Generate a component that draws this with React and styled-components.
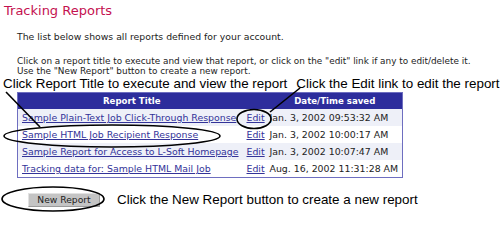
import React from "react";
import styled, { createGlobalStyle } from "styled-components";

const GlobalStyle = createGlobalStyle`
  html, body {
    margin: 0;
    padding: 0;
    background: #fff;
  }
`;

const Page = styled.div`
  position: relative;
  width: 500px;
  height: 217px;
  overflow: hidden;
  font-family: "DejaVu Sans", Verdana, sans-serif;
  color: #222;
`;

const Title = styled.h1`
  margin: 0;
  padding: 3px 0 0 4px;
  font-size: 13px;
  line-height: 16px;
  font-weight: normal;
  color: #c41150;
`;

const Text = styled.p`
  margin: ${(p) => p.$top}px 0 0 17px;
  font-size: ${(p) => p.$size}px;
  line-height: 10px;
  white-space: nowrap;
`;

const Notes = styled.div`
  display: flex;
  gap: ${(p) => p.$gap}px;
  align-items: center;
  padding-left: ${(p) => p.$left}px;
`;

const Note = styled.span`
  font-family: "Liberation Sans", Arial, sans-serif;
  font-size: 13.4px;
  line-height: 16px;
  color: #000;
  white-space: nowrap;
`;

const Table = styled.table`
  margin: 0 0 0 17px;
  width: 385px;
  table-layout: fixed;
  border-collapse: collapse;
  border: 1px solid #6e6ec0;
  font-size: 9.4px;
`;

const Head = styled.th`
  background: #2d2d9c;
  color: #fff;
  font-weight: bold;
  height: 16px;
  padding: 0;
  text-align: center;
  font-size: 8.6px;
`;

const Row = styled.tr`
  background: ${(p) => (p.$shade ? "#eef0f8" : "#fff")};
`;

const Cell = styled.td`
  height: 17px;
  padding: 0 0 0 ${(p) => p.$pad || 0}px;
  white-space: nowrap;
  overflow: hidden;
  color: #222;
`;

const Link = styled.a`
  color: #333399;
  text-decoration: underline;
`;

const ButtonRow = styled.div`
  display: flex;
  align-items: center;
  gap: 17px;
  margin-top: 14px;
  padding-left: 28px;
`;

const Button = styled.button`
  width: 72px;
  height: 14px;
  padding: 0;
  background: #c4c4c4;
  border: 1px solid #9a9a9a;
  border-top-color: #e2e2e2;
  border-left-color: #e2e2e2;
  font-family: "DejaVu Sans", Verdana, sans-serif;
  font-size: 9.2px;
  line-height: 12px;
  color: #222;
`;

const Marks = styled.svg`
  position: absolute;
  left: 0;
  top: 0;
  pointer-events: none;
`;

const reports = [
  ["Sample Plain-Text Job Click-Through Response", "Jan. 3, 2002 09:53:32 AM"],
  ["Sample HTML Job Recipient Response", "Jan. 3, 2002 10:00:17 AM"],
  ["Sample Report for Access to L-Soft Homepage", "Jan. 3, 2002 10:07:47 AM"],
  ["Tracking data for: Sample HTML Mail Job", "Aug. 16, 2002 11:31:28 AM"],
];

export default function App() {
  return (
    <Page>
      <GlobalStyle />
      <Title>Tracking Reports</Title>
      <Text $top={13} $size={9.3}>
        The list below shows all reports defined for your account.
      </Text>
      <Text $top={14} $size={8.9}>
        Click on a report title to execute and view that report, or click on the "edit" link if any to edit/delete it.
      </Text>
      <Text $top={0} $size={8.9}>
        Use the "New Report" button to create a new report.
      </Text>
      <Notes $gap={9} $left={3}>
        <Note>Click Report Title to execute and view the report</Note>
        <Note>Click the Edit link to edit the report</Note>
      </Notes>
      <Table>
        <colgroup>
          <col style={{ width: 228 }} />
          <col style={{ width: 22 }} />
          <col style={{ width: 135 }} />
        </colgroup>
        <thead>
          <tr>
            <Head>Report Title</Head>
            <Head />
            <Head>Date/Time saved</Head>
          </tr>
        </thead>
        <tbody>
          {reports.map(([name, date], i) => (
            <Row key={name} $shade={i % 2 === 0}>
              <Cell $pad={4}>
                <Link href="#">{name}</Link>
              </Cell>
              <Cell $pad={1}>
                <Link href="#">Edit</Link>
              </Cell>
              <Cell $pad={2}>{date}</Cell>
            </Row>
          ))}
        </tbody>
      </Table>
      <ButtonRow>
        <Button>New Report</Button>
        <Note>Click the New Report button to create a new report</Note>
      </ButtonRow>
      <Marks width="500" height="217" viewBox="0 0 500 217">
        <g fill="none" stroke="#000" strokeWidth="1.6">
          <line x1="6" y1="92" x2="40" y2="127" />
          <ellipse cx="112" cy="136" rx="108" ry="11" />
          <line x1="300" y1="88" x2="270" y2="112" />
          <ellipse cx="254" cy="119" rx="17" ry="9.5" />
          <ellipse cx="53" cy="199" rx="51" ry="12" />
        </g>
      </Marks>
    </Page>
  );
}
